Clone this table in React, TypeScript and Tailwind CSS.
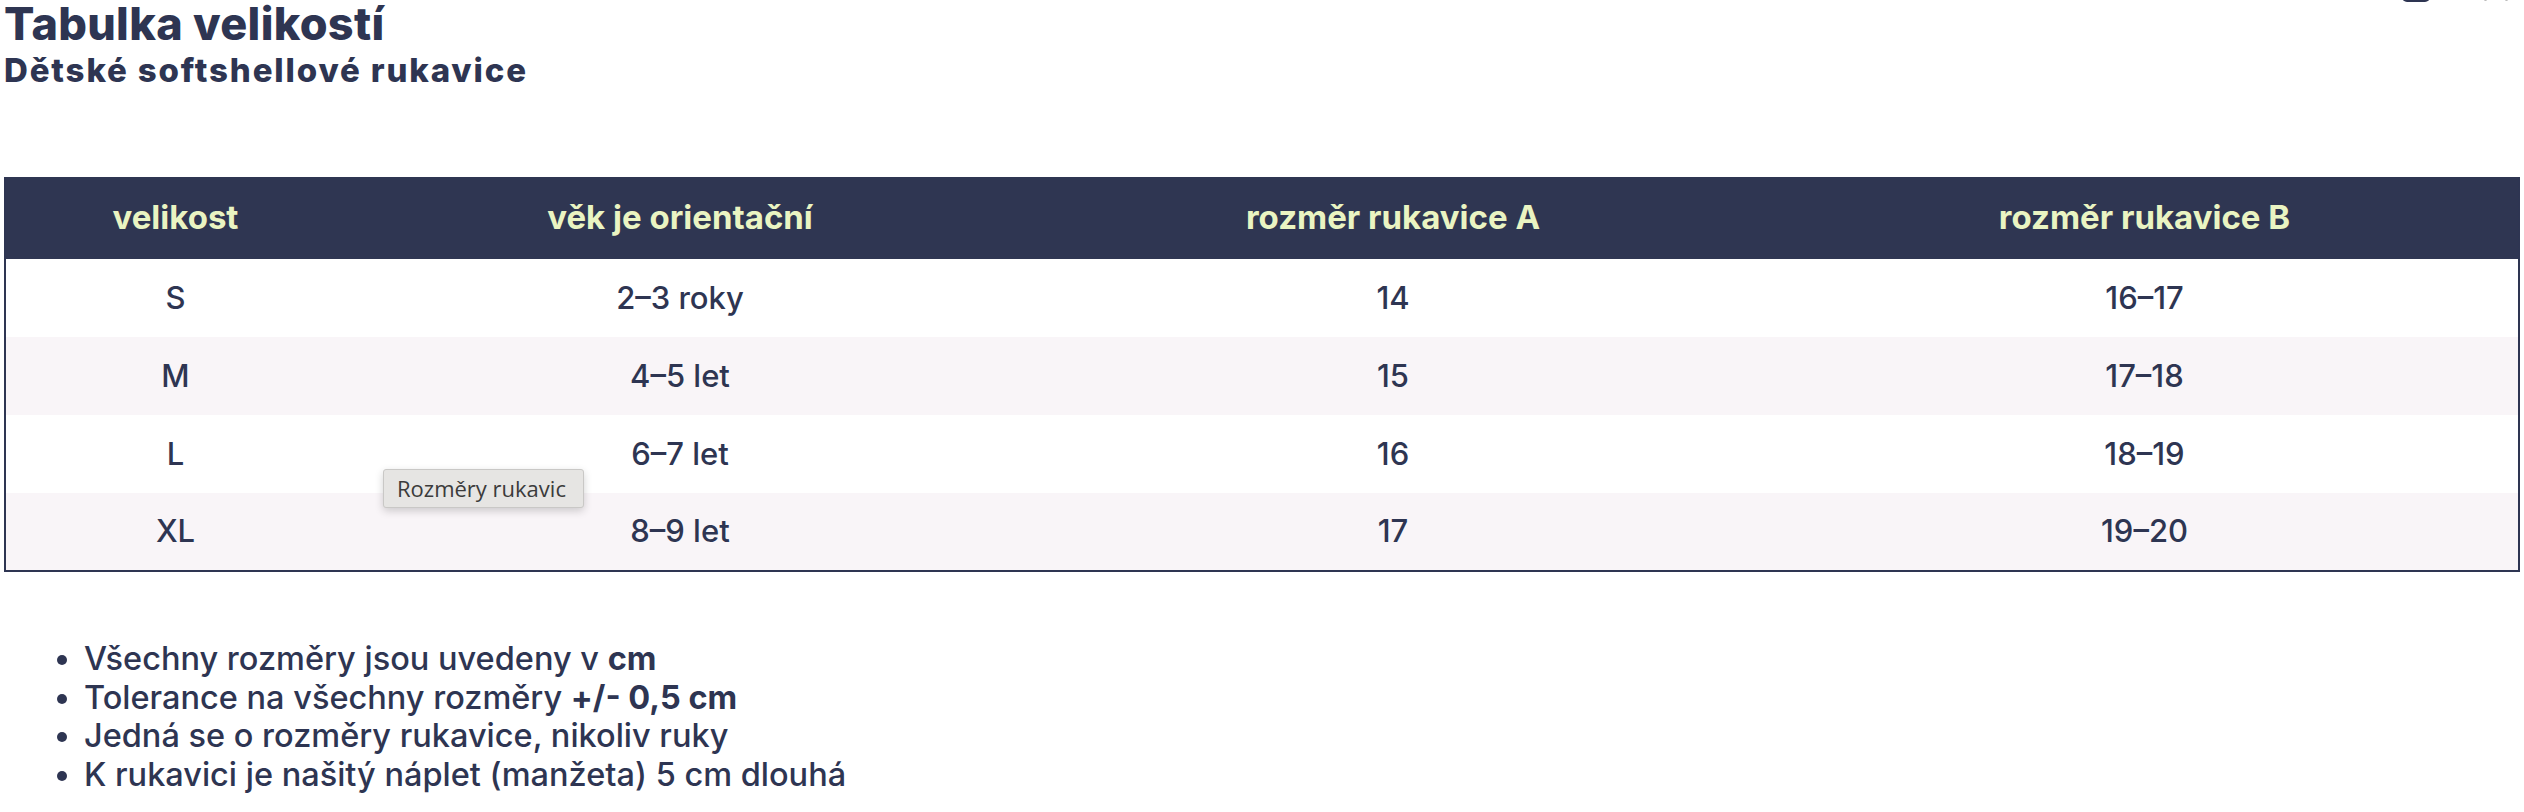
import React from "react";

const rows = [
  ["S", "2–3 roky", "14", "16–17"],
  ["M", "4–5 let", "15", "17–18"],
  ["L", "6–7 let", "16", "18–19"],
  ["XL", "8–9 let", "17", "19–20"],
];

export default function App() {
  return (
    <div
      className="relative min-h-[812px] w-[2524px] bg-white text-[#2e3552]"
      style={{ fontFamily: "Inter, 'Noto Sans', sans-serif" }}
    >
      {/* clipped controls at top right */}
      <div className="absolute left-[2402px] top-[-10px] h-[12px] w-[28px] rounded-[5px] bg-[#2e3552]" />
      <div className="absolute left-[2484px] top-[-6px] h-[7px] w-[3px] rounded-sm bg-[#b8b8b8]" />
      <div className="absolute left-[2505px] top-[-6px] h-[7px] w-[3px] rounded-sm bg-[#b8b8b8]" />

      <div className="px-[4px]">
        <h1 className="pt-[1px] text-[45px] font-extrabold leading-[46px] tracking-[0.3px]">
          Tabulka velikostí
        </h1>
        <h2 className="mt-[5px] text-[33px] font-extrabold leading-[36px] tracking-[1.85px]">
          Dětské softshellové rukavice
        </h2>

        <table className="mt-[89px] w-[2516px] table-fixed border-collapse border-[2px] border-t-0 border-[#2e3552]">
          <colgroup>
            <col className="w-[340px]" />
            <col className="w-[670px]" />
            <col className="w-[756px]" />
            <col />
          </colgroup>
          <thead>
            <tr className="h-[82px] bg-[#2f3652] text-[#eaf4c2]">
              <th className="text-[33px] font-bold">velikost</th>
              <th className="text-[33px] font-bold">věk je orientační</th>
              <th className="text-[33px] font-bold">rozměr rukavice A</th>
              <th className="text-[33px] font-bold">rozměr rukavice B</th>
            </tr>
          </thead>
          <tbody>
            {rows.map((r, i) => (
              <tr
                key={r[0]}
                className={
                  i % 2 === 1 ? "h-[78px] bg-[#f9f5f8]" : "h-[78px] bg-white"
                }
              >
                {r.map((c, j) => (
                  <td key={j} className="text-center text-[31px] font-medium">
                    {c}
                  </td>
                ))}
              </tr>
            ))}
          </tbody>
        </table>

        <ul className="mt-[68px] list-disc pl-[80px] text-[32.5px] font-medium leading-[38.7px]">
          <li>
            Všechny rozměry jsou uvedeny v <b className="font-bold">cm</b>
          </li>
          <li>
            Tolerance na všechny rozměry{" "}
            <b className="font-bold">+/- 0,5 cm</b>
          </li>
          <li>Jedná se o rozměry rukavice, nikoliv ruky</li>
          <li>K rukavici je našitý náplet (manžeta) 5 cm dlouhá</li>
        </ul>
      </div>

      {/* native tooltip */}
      <div
        className="absolute left-[383px] top-[469px] flex h-[39px] w-[201px] items-center rounded-[3px] border border-[#c9c8c6] bg-[#e6e5e3] pl-[13px] text-[22px] text-[#3b3b3b] shadow-[0_3px_8px_rgba(0,0,0,0.18)]"
        style={{ fontFamily: "'Open Sans', 'Noto Sans', sans-serif" }}
      >
        Rozměry rukavic
      </div>
    </div>
  );
}
